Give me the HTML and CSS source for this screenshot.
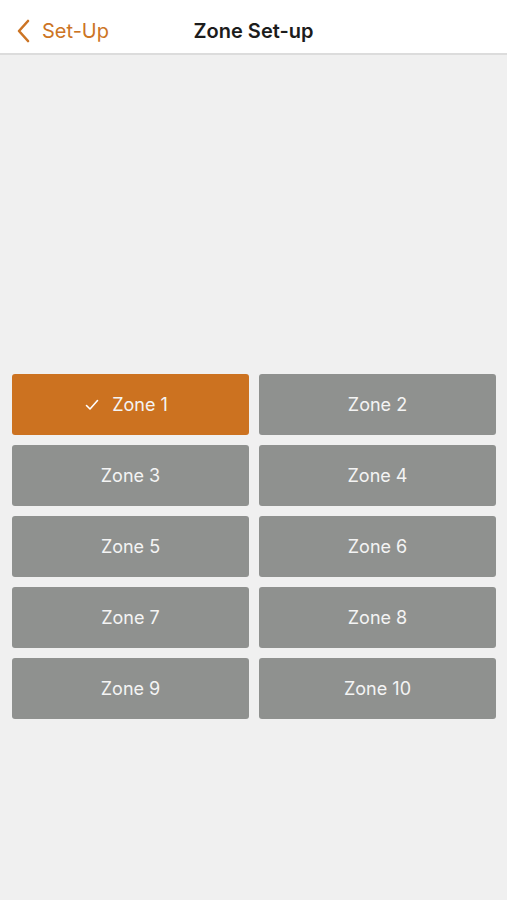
FILE: index.html
```html
<!DOCTYPE html>
<html lang="en">

<head>
    <meta charset="UTF-8">
    <meta name="viewport" content="width=device-width, initial-scale=1.0">
    <title>Zone Set-up</title>
    <link rel="stylesheet" href="styles.css">
</head>

<body>
    <div class="nav-bar">
        <a class="back-link" href="#">
            <svg class="back-icon" width="14" height="24" viewBox="0 0 14 24">
                <path d="M12 2 L3 12 L12 22" fill="none" stroke="#cc7424" stroke-width="2.6" stroke-linecap="round" stroke-linejoin="round" />
            </svg>
            <span>Set-Up</span>
        </a>
        <div class="nav-title">Zone Set-up</div>
    </div>
    <div class="zone-container">
        <div class="zone-grid">
            <button class="zone-btn selected">
                <svg class="check-icon" width="14" height="12" viewBox="0 0 14 12">
                    <path d="M1.5 6.5 L5 10 L12.5 1.5" fill="none" stroke="#fff" stroke-width="1.6" stroke-linecap="round" stroke-linejoin="round" />
                </svg>
                Zone 1
            </button>
            <button class="zone-btn">Zone 2</button>
            <button class="zone-btn">Zone 3</button>
            <button class="zone-btn">Zone 4</button>
            <button class="zone-btn">Zone 5</button>
            <button class="zone-btn">Zone 6</button>
            <button class="zone-btn">Zone 7</button>
            <button class="zone-btn">Zone 8</button>
            <button class="zone-btn">Zone 9</button>
            <button class="zone-btn">Zone 10</button>
        </div>
    </div>
</body>

</html>
```
FILE: styles.css
```css
body {
    margin: 0;
    background-color: #f0f0f0;
    font-family: Inter, "Noto Sans", sans-serif;
}

.nav-bar {
    position: relative;
    height: 55px;
    padding-top: 8px;
    box-sizing: border-box;
    background-color: white;
    border-bottom: 2px solid #dcdcdc;
    display: flex;
    align-items: center;
    justify-content: center;
}

.back-link {
    position: absolute;
    left: 16px;
    top: 8px;
    bottom: 0;
    display: flex;
    align-items: center;
    gap: 12px;
    color: #cc7424;
    text-decoration: none;
    font-size: 20px;
}

.nav-title {
    font-size: 20px;
    font-weight: 600;
    color: #1c1c1c;
}

.zone-container {
    padding: 319px 11px 0 12px;
}

.zone-grid {
    display: grid;
    grid-template-columns: 1fr 1fr;
    column-gap: 10px;
    row-gap: 10px;
}

.zone-btn {
    height: 61px;
    border: none;
    border-radius: 3px;
    background-color: #8f918f;
    color: #f4f4f4;
    font-family: Inter, "Noto Sans", sans-serif;
    font-size: 18px;
    display: flex;
    align-items: center;
    justify-content: center;
    gap: 13px;
    padding: 0;
}

.zone-btn.selected {
    background-color: #cc7220;
    padding-right: 8px;
}
```
